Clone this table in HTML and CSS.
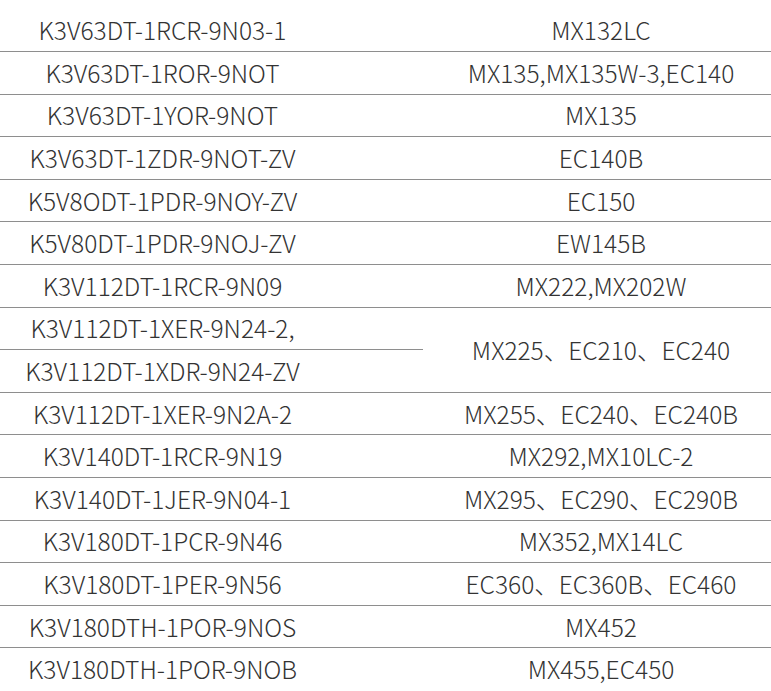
FILE: index.html
```html
<!DOCTYPE html>
<html lang="zh">
<head>
<meta charset="utf-8">
<title>Pump models</title>
<link rel="stylesheet" href="styles.css">
</head>
<body>
<table class="models">
  <colgroup><col class="col-pump"><col class="col-machine"></colgroup>
  <tbody>
    <tr><td class="pump">K3V63DT-1RCR-9N03-1</td><td class="machine">MX132LC</td></tr>
    <tr><td class="pump">K3V63DT-1ROR-9NOT</td><td class="machine">MX135,MX135W-3,EC140</td></tr>
    <tr><td class="pump">K3V63DT-1YOR-9NOT</td><td class="machine">MX135</td></tr>
    <tr><td class="pump">K3V63DT-1ZDR-9NOT-ZV</td><td class="machine">EC140B</td></tr>
    <tr><td class="pump">K5V8ODT-1PDR-9NOY-ZV</td><td class="machine">EC150</td></tr>
    <tr><td class="pump">K5V80DT-1PDR-9NOJ-ZV</td><td class="machine">EW145B</td></tr>
    <tr><td class="pump">K3V112DT-1RCR-9N09</td><td class="machine">MX222,MX202W</td></tr>
    <tr><td class="pump">K3V112DT-1XER-9N24-2,</td><td class="machine" rowspan="2">MX225、EC210、EC240</td></tr>
    <tr><td class="pump">K3V112DT-1XDR-9N24-ZV</td></tr>
    <tr><td class="pump">K3V112DT-1XER-9N2A-2</td><td class="machine">MX255、EC240、EC240B</td></tr>
    <tr><td class="pump">K3V140DT-1RCR-9N19</td><td class="machine">MX292,MX10LC-2</td></tr>
    <tr><td class="pump">K3V140DT-1JER-9N04-1</td><td class="machine">MX295、EC290、EC290B</td></tr>
    <tr><td class="pump">K3V180DT-1PCR-9N46</td><td class="machine">MX352,MX14LC</td></tr>
    <tr><td class="pump">K3V180DT-1PER-9N56</td><td class="machine">EC360、EC360B、EC460</td></tr>
    <tr><td class="pump">K3V180DTH-1POR-9NOS</td><td class="machine">MX452</td></tr>
    <tr><td class="pump">K3V180DTH-1POR-9NOB</td><td class="machine">MX455,EC450</td></tr>
  </tbody>
</table>
</body>
</html>
```
FILE: styles.css
```css
html, body {
  margin: 0;
  padding: 0;
  background: #ffffff;
}
body {
  padding-top: 9px;
  font-family: "Noto Sans CJK SC", "Noto Sans", sans-serif;
  font-weight: 300;
  color: #333333;
}
.models {
  width: 771px;
  table-layout: fixed;
  border-collapse: collapse;
  border-spacing: 0;
}
.col-pump { width: 423px; }
.col-machine { width: 348px; }
.models tr { height: 42.6px; }
.models td {
  padding: 0;
  text-align: center;
  vertical-align: middle;
  font-size: 24.5px;
  line-height: 28px;
  white-space: nowrap;
  border-bottom: 1px solid #8e8e8e;
}
.models tr:last-child td { border-bottom: none; }
.pump { padding-right: 98px !important; }
.machine { padding-left: 8px !important; }
```
